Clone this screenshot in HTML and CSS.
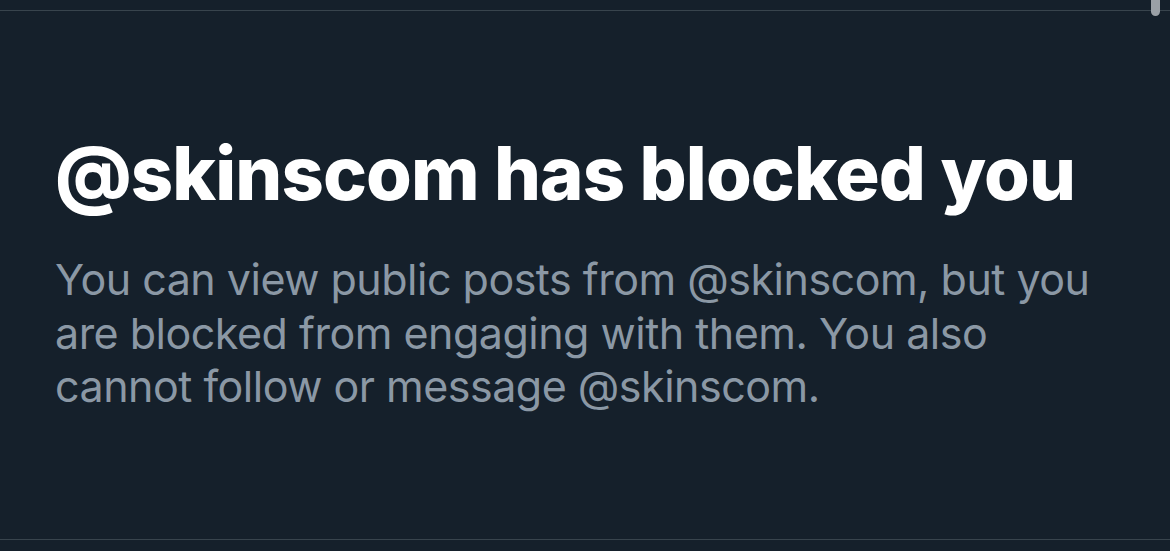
FILE: index.html
```html
<!DOCTYPE html>
<html>
<head>
<meta charset="utf-8">
<link rel="stylesheet" href="styles.css">
</head>
<body>
<div class="page">
  <div class="rule top"></div>
  <main class="content">
    <h1 class="title">@skinscom has blocked you</h1>
    <p class="desc">You can view public posts from @skinscom, but you are blocked from engaging with them. You also cannot follow or message @skinscom.</p>
  </main>
  <div class="rule bottom"></div>
  <div class="thumb"></div>
</div>
</body>
</html>
```
FILE: styles.css
```css
html, body {
  margin: 0;
  padding: 0;
  background: #15202b;
}
.page {
  position: relative;
  width: 1170px;
  height: 551px;
  overflow: hidden;
  background: #15202b;
  display: flex;
  flex-direction: column;
  font-family: "Inter", "Liberation Sans", sans-serif;
}
.rule {
  height: 1px;
  background: #38444d;
  flex: none;
}
.rule.top { margin-top: 10px; }
.content {
  flex: 1;
  padding: 118px 60px 0 55px;
}
.title {
  margin: 0;
  color: #ffffff;
  font-size: 74px;
  font-weight: 800;
  line-height: 88px;
  letter-spacing: -0.9px;
}
.desc {
  margin: 36px 0 0 0;
  color: #8b98a5;
  font-size: 43px;
  font-weight: 400;
  line-height: 53.5px;
  letter-spacing: -0.5px;
}
.rule.bottom { margin-bottom: 11px; }
.thumb {
  position: absolute;
  right: 10px;
  top: 0;
  width: 9px;
  height: 16px;
  background: #9aa0a6;
  border-radius: 0 0 5px 5px;
}
```
